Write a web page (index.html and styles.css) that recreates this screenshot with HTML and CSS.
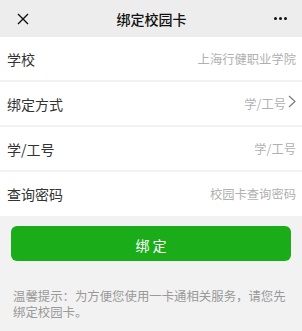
FILE: index.html
```html
<!DOCTYPE html>
<html lang="zh">
<head>
<meta charset="utf-8">
<link rel="stylesheet" href="styles.css">
</head>
<body>
<header class="nav">
  <svg class="nav-close" width="12" height="12" viewBox="0 0 12 12"><path d="M1 1L11 11M11 1L1 11" stroke="#111" stroke-width="1.4" fill="none"/></svg>
  <div class="nav-title">绑定校园卡</div>
  <div class="nav-more"><span></span><span></span><span></span></div>
</header>
<main>
  <div class="row"><span class="label">学校</span><span class="value">上海行健职业学院</span></div>
  <div class="row"><span class="label">绑定方式</span><span class="value">学/工号<svg class="chev" width="8" height="13" viewBox="0 0 8 13"><path d="M1 1L7 6.5L1 12" stroke="#777" stroke-width="1.1" fill="none"/></svg></span></div>
  <div class="row"><span class="label">学/工号</span><span class="value">学/工号</span></div>
  <div class="row"><span class="label">查询密码</span><span class="value">校园卡查询密码</span></div>
  <button class="btn">绑&nbsp;定</button>
  <p class="tip">温馨提示：为方便您使用一卡通相关服务，请您先绑定校园卡。</p>
</main>
</body>
</html>
```
FILE: styles.css
```css
html, body { margin: 0; padding: 0; }
body {
  background: #f2f2f2;
  font-family: "Noto Sans CJK SC", "Noto Sans", sans-serif;
  width: 302px;
  height: 331px;
  overflow: hidden;
}
.nav {
  height: 37px;
  background: #ededed;
  display: flex;
  align-items: center;
  justify-content: space-between;
  padding: 0 14px 0 17px;
}
.nav-close { display: block; }
.nav-title { font-size: 14px; font-weight: 500; color: #111; }
.nav-more { display: flex; gap: 2px; width: 14px; }
.nav-more span { width: 3px; height: 3px; border-radius: 50%; background: #111; display: block; }
.row {
  height: 43px;
  background: #fff;
  margin-bottom: 2px;
  display: flex;
  align-items: center;
  justify-content: space-between;
  padding: 0 6px 0 7px;
}
.row:last-of-type { height: 44px; }
.label { font-size: 14px; color: #333; }
.value { font-size: 12.3px; color: #b0b0b0; display: flex; align-items: center; }
.chev { margin-left: 2px; margin-top: -5px; }
.btn {
  display: block;
  margin: 10px 11px 0 11px;
  width: 280px;
  height: 35px;
  padding: 2px 0 0 0;
  border: 0;
  border-radius: 6px;
  background: #1aad19;
  color: #fff;
  font-family: inherit;
  font-size: 14px;
}
.tip {
  margin: 27px 13px 0 13px;
  font-size: 12.4px;
  line-height: 16px;
  color: #999;
}
```
